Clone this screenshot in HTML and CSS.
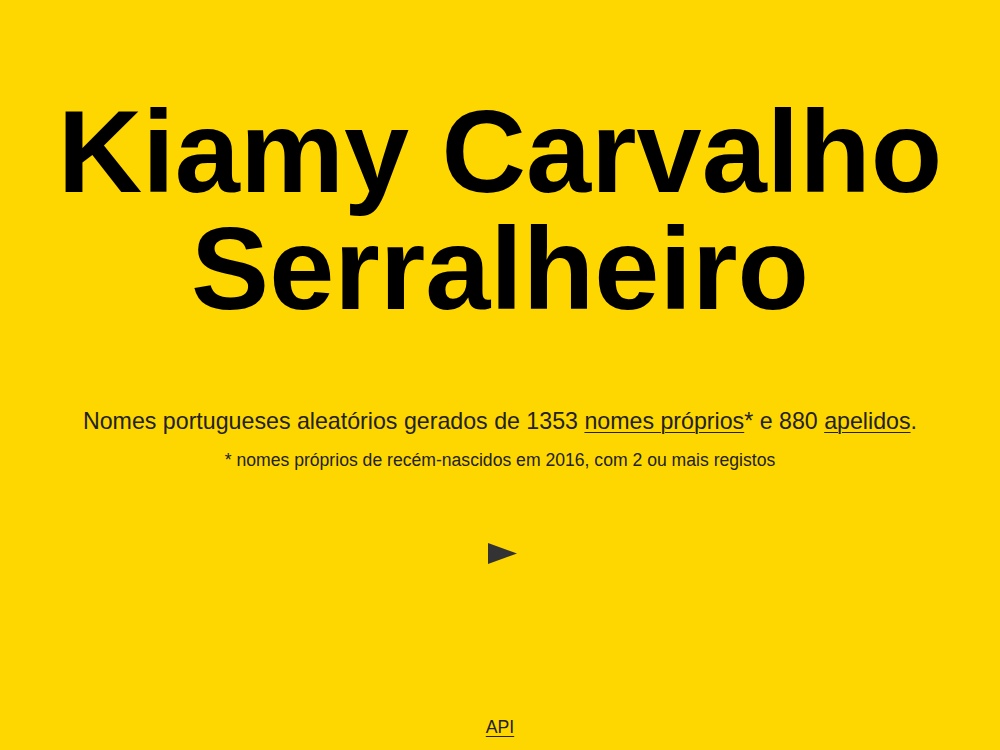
FILE: index.html
```html
<!DOCTYPE html>
<html lang="pt">
<head>
<meta charset="utf-8">
<title>Nomes portugueses</title>
<link rel="stylesheet" href="styles.css">
</head>
<body>
<div class="page">
  <main class="main">
    <h1 class="name">Kiamy Carvalho<br>Serralheiro</h1>
    <p class="lead">Nomes portugueses aleatórios gerados de 1353 <a href="#">nomes próprios</a>* e 880 <a href="#">apelidos</a>.</p>
    <p class="note">* nomes próprios de recém-nascidos em 2016, com 2 ou mais registos</p>
    <button class="next" type="button" aria-label="Novo nome">
      <svg width="29" height="21" viewBox="0 0 29 21"><polygon points="0,0 29,10.5 0,21" fill="#333"/></svg>
    </button>
  </main>
  <footer class="footer"><a href="#">API</a></footer>
</div>
</body>
</html>
```

FILE: styles.css
```css
html, body {
  margin: 0;
  padding: 0;
  background: #ffd700;
}
body {
  font-family: "Liberation Sans", Arial, sans-serif;
  color: #222;
}
.page {
  height: 750px;
  display: flex;
  flex-direction: column;
  align-items: center;
}
.main {
  flex: 1;
  display: flex;
  flex-direction: column;
  align-items: center;
  text-align: center;
}
.name {
  margin: 93px 0 0;
  font-size: 117px;
  line-height: 117px;
  font-weight: bold;
  color: #000;
}
.lead {
  margin: 80px 0 0;
  font-size: 23.2px;
  line-height: 28px;
}
.note {
  margin: 15px 0 0;
  font-size: 17.6px;
  line-height: 20px;
}
.lead a, .footer a {
  color: inherit;
  text-decoration: underline;
  text-decoration-thickness: 1px;
  text-underline-offset: 3px;
}
.next {
  margin: 73px 0 0 5px;
  padding: 0;
  border: 0;
  background: none;
  cursor: pointer;
  line-height: 0;
}
.footer {
  padding-bottom: 13px;
  font-size: 17.6px;
  line-height: 20px;
}
```
